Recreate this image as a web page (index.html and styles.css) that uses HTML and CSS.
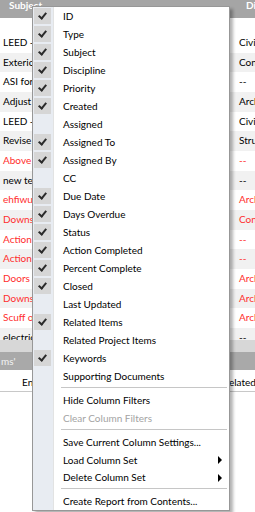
FILE: index.html
```html
<!DOCTYPE html>
<html lang="en">
<head>
  <meta charset="UTF-8" />
  <meta name="viewport" content="width=device-width, initial-scale=1.0" />
  <title>Kolomkeuze</title>
  <link rel="stylesheet" href="styles.css">
</head>
<body>
  <div class="grid">
    <div class="grid-head">
      <div class="col-a">Subject</div>
      <div class="col-b">Discipline</div>
    </div>
    <div class="grid-filter">
      <div class="col-a"></div>
      <div class="col-b"><span class="filter-mark"></span></div>
    </div>
    <div class="grid-body">
      <div class="grid-row"><div class="col-a">LEED - Site Work</div><div class="col-b">Civil</div></div>
      <div class="grid-row"><div class="col-a">Exterior Finishes</div><div class="col-b">Construction</div></div>
      <div class="grid-row"><div class="col-a">ASI for Lobby</div><div class="col-b">--</div></div>
      <div class="grid-row"><div class="col-a">Adjust Door Frames</div><div class="col-b">Architectural</div></div>
      <div class="grid-row"><div class="col-a">LEED - Storm Water</div><div class="col-b">Civil</div></div>
      <div class="grid-row"><div class="col-a">Revise Beam Sizes</div><div class="col-b">Structural</div></div>
      <div class="grid-row late"><div class="col-a">Above Ceiling Check</div><div class="col-b">--</div></div>
      <div class="grid-row"><div class="col-a">new test</div><div class="col-b">--</div></div>
      <div class="grid-row late"><div class="col-a">ehfiwuehf</div><div class="col-b">Architectural</div></div>
      <div class="grid-row late"><div class="col-a">Downspout Location</div><div class="col-b">Construction</div></div>
      <div class="grid-row late"><div class="col-a">Action Item 1</div><div class="col-b">--</div></div>
      <div class="grid-row late"><div class="col-a">Action Item 2</div><div class="col-b">--</div></div>
      <div class="grid-row late"><div class="col-a">Doors at Stair 2</div><div class="col-b">Architectural</div></div>
      <div class="grid-row late"><div class="col-a">Downspouts</div><div class="col-b">Architectural</div></div>
      <div class="grid-row late"><div class="col-a">Scuff on Wall</div><div class="col-b">Architectural</div></div>
      <div class="grid-row"><div class="col-a">electrical outlets</div><div class="col-b">--</div></div>
    </div>
    <div class="scroll-bar"></div>
    <div class="group-bar">ms'</div>
    <div class="tool-bar">
      <span class="tool-left">Enable Editing</span>
      <span class="tool-right">Related Items</span>
    </div>
  </div>

  <div class="menu">
    <div class="item on"><span class="box"></span>ID</div>
    <div class="item on"><span class="box"></span>Type</div>
    <div class="item on"><span class="box"></span>Subject</div>
    <div class="item on"><span class="box"></span>Discipline</div>
    <div class="item on"><span class="box"></span>Priority</div>
    <div class="item on"><span class="box"></span>Created</div>
    <div class="item"><span class="box"></span>Assigned</div>
    <div class="item on"><span class="box"></span>Assigned To</div>
    <div class="item on"><span class="box"></span>Assigned By</div>
    <div class="item"><span class="box"></span>CC</div>
    <div class="item on"><span class="box"></span>Due Date</div>
    <div class="item on"><span class="box"></span>Days Overdue</div>
    <div class="item on"><span class="box"></span>Status</div>
    <div class="item on"><span class="box"></span>Action Completed</div>
    <div class="item on"><span class="box"></span>Percent Complete</div>
    <div class="item on"><span class="box"></span>Closed</div>
    <div class="item"><span class="box"></span>Last Updated</div>
    <div class="item on"><span class="box"></span>Related Items</div>
    <div class="item"><span class="box"></span>Related Project Items</div>
    <div class="item on"><span class="box"></span>Keywords</div>
    <div class="item"><span class="box"></span>Supporting Documents</div>
    <div class="sep"></div>
    <div class="item"><span class="box"></span>Hide Column Filters</div>
    <div class="item off"><span class="box"></span>Clear Column Filters</div>
    <div class="sep"></div>
    <div class="item"><span class="box"></span>Save Current Column Settings...</div>
    <div class="item sub"><span class="box"></span>Load Column Set</div>
    <div class="item sub"><span class="box"></span>Delete Column Set</div>
    <div class="sep"></div>
    <div class="item"><span class="box"></span>Create Report from Contents...</div>
  </div>
</body>
</html>
```

FILE: styles.css
```css
body {
  margin: 0;
  width: 255px;
  height: 512px;
  overflow: hidden;
  background: white;
  font-family: "Segoe UI", Lato, sans-serif;
  font-size: 10px;
  color: black;
}
.grid {
  width: 255px;
  overflow: hidden;
}
.grid-head, .grid-filter, .grid-row {
  display: flex;
  white-space: nowrap;
}
.col-a {
  width: 234px;
  flex: none;
  overflow: hidden;
  padding-left: 3px;
  box-sizing: border-box;
}
.col-b {
  flex: 1;
  min-width: 0;
  overflow: hidden;
  padding-left: 5px;
}
.grid-head {
  height: 18px;
  line-height: 11px;
  background: #a5a5a5;
  color: white;
  font-weight: bold;
}
.grid-head .col-a {
  padding-left: 9px;
}
.grid-head .col-b {
  padding-left: 12px;
}
.grid-filter {
  height: 15px;
}
.filter-mark {
  display: block;
  width: 2px;
  height: 5px;
  margin: 3px 0 0 -7px;
  background: #b9cbe0;
}
.grid-body {
  height: 307px;
  overflow: hidden;
}
.grid-row {
  height: 19.67px;
  line-height: 19.67px;
}
.grid-row:nth-child(even) {
  background: #f1f1f1;
}
.grid-row.late {
  color: #ff2d2d;
}
.scroll-bar {
  height: 12px;
  background: #d7d7d7;
}
.group-bar {
  height: 18px;
  line-height: 18px;
  background: #a9a9a9;
  color: #f4f4f4;
  padding-left: 1px;
}
.tool-bar {
  display: flex;
  height: 21px;
  line-height: 25px;
  border-bottom: 1px solid #c8c8c8;
  white-space: nowrap;
  overflow: hidden;
}
.tool-left {
  flex: none;
  margin-left: 22px;
  width: 201px;
}
.tool-right {
  flex: none;
}

.menu {
  position: absolute;
  left: 32px;
  top: 6px;
  width: 196px;
  border: 1px solid #979797;
  background: linear-gradient(to right, #e8ecf2 20px, #e2e3e3 20px, #e2e3e3 21px, white 21px);
  box-shadow: 3px 3px 3px rgba(0, 0, 0, 0.3);
  white-space: nowrap;
  font-size: 10px;
}
.item {
  display: flex;
  align-items: center;
  height: 18px;
}
.item:nth-last-child(-n+4) {
  height: 17.5px;
}
.box {
  position: relative;
  width: 17px;
  height: 16px;
  margin: 0 12px 0 1px;
  flex: none;
}
.on .box {
  background: #d6d6d6;
}
.on .box::after {
  content: "";
  position: absolute;
  left: 6px;
  top: 3px;
  width: 3px;
  height: 6px;
  border-right: 2px solid #2b2b2b;
  border-bottom: 2px solid #2b2b2b;
  transform: rotate(40deg);
}
.off {
  color: #a3a3a3;
}
.sub {
  position: relative;
}
.sub::after {
  content: "";
  position: absolute;
  right: 7px;
  top: 5px;
  border-left: 4px solid black;
  border-top: 4px solid transparent;
  border-bottom: 4px solid transparent;
}
.sep {
  height: 6px;
  margin-left: 28px;
  margin-right: 2px;
  background: linear-gradient(to bottom, white 2px, #c6c6c6 2px, #c6c6c6 3px, white 3px);
}
```
